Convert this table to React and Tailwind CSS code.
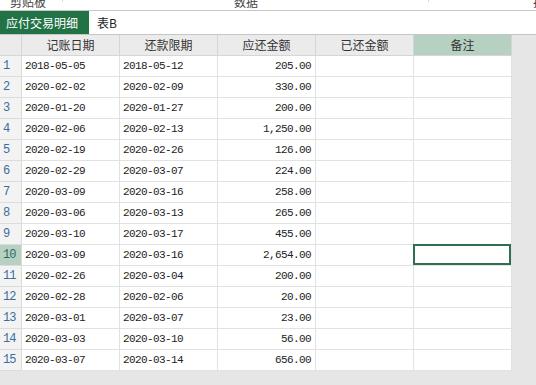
const ROWS = [
  ["2018-05-05", "2018-05-12", "205.00"],
  ["2020-02-02", "2020-02-09", "330.00"],
  ["2020-01-20", "2020-01-27", "200.00"],
  ["2020-02-06", "2020-02-13", "1,250.00"],
  ["2020-02-19", "2020-02-26", "126.00"],
  ["2020-02-29", "2020-03-07", "224.00"],
  ["2020-03-09", "2020-03-16", "258.00"],
  ["2020-03-06", "2020-03-13", "265.00"],
  ["2020-03-10", "2020-03-17", "455.00"],
  ["2020-03-09", "2020-03-16", "2,654.00"],
  ["2020-02-26", "2020-03-04", "200.00"],
  ["2020-02-28", "2020-02-06", "20.00"],
  ["2020-03-01", "2020-03-07", "23.00"],
  ["2020-03-03", "2020-03-10", "56.00"],
  ["2020-03-07", "2020-03-14", "656.00"],
];

const HEADERS = ["记账日期", "还款限期", "应还金额", "已还金额", "备注"];
const SELECTED = 10;

const cjk = "font-['Noto_Sans_CJK_SC',sans-serif]";
const mono = "font-['Liberation_Mono',monospace] text-[11px] tracking-[-0.6px]";

export default function App() {
  return (
    <div className="w-[536px] h-[385px] overflow-hidden bg-[#e6e6e6] text-[#222]">
      {/* ribbon remnant, cut off at the top */}
      <div className={`h-[11px] bg-white border-b border-[#c6c6c6] flex overflow-hidden text-[12px] text-[#444] ${cjk}`}>
        <div className="w-[63px] h-[6px] border-r border-[#d8d8d8] pl-[10px] -mt-[4px] leading-[12px]">剪贴板</div>
        <div className="w-[366px] h-[6px] border-r border-[#d8d8d8] pl-[171px] -mt-[4px] leading-[12px]">数据</div>
        <div className="flex-1 flex justify-end -mt-[4px] leading-[12px]">
          <span className="-mr-[9px]">排</span>
        </div>
      </div>

      {/* sheet tabs */}
      <div className={`h-[24px] bg-white border-b border-[#c6c6c6] flex items-end ${cjk}`}>
        <div className="w-[89px] h-[23px] bg-[#217346] text-white text-[12px] leading-[23px] pl-[6px]">
          应付交易明细
        </div>
        <div className="h-[23px] leading-[23px] text-[12px] pl-[8px] text-[#222]">表B</div>
      </div>

      {/* grid */}
      <div className="w-[512px]">
        <div className={`flex h-[21px] bg-[#ebebeb] border-b border-[#d6d6d6] text-[12px] text-[#333] ${cjk}`}>
          <div className="w-[22px] border-r border-[#d6d6d6]" />
          {HEADERS.map((h, i) => (
            <div
              key={h}
              className={
                "w-[98px] border-r border-[#d6d6d6] flex items-center justify-center leading-none " +
                (i === 4 ? "bg-[#b6d1c1]" : "")
              }
            >
              {h}
            </div>
          ))}
        </div>
        {ROWS.map((r, idx) => {
          const n = idx + 1;
          const sel = n === SELECTED;
          return (
            <div key={n} className="flex h-[21px] bg-white">
              <div
                className={
                  "w-[22px] border-r border-b border-[#dcdcdc] flex items-center pl-[3px] font-['Liberation_Mono',monospace] text-[12px] tracking-[-1px] " +
                  (sel ? "bg-[#b6d1c1] text-[#2f6a6a]" : "bg-[#f3f3f3] text-[#3b6c9e]")
                }
              >
                {n}
              </div>
              <div className={`w-[98px] border-r border-b border-[#e2e2e2] flex items-center pl-[3px] ${mono}`}>{r[0]}</div>
              <div className={`w-[98px] border-r border-b border-[#e2e2e2] flex items-center pl-[3px] ${mono}`}>{r[1]}</div>
              <div className={`w-[98px] border-r border-b border-[#e2e2e2] flex items-center justify-end pr-[4px] ${mono}`}>{r[2]}</div>
              <div className="w-[98px] border-r border-b border-[#e2e2e2]" />
              <div className="w-[98px] border-r border-b border-[#e2e2e2] relative">
                {sel && <div className="absolute -left-px -top-px right-0 bottom-0 border-2 border-[#2f6e4f]" />}
              </div>
            </div>
          );
        })}
      </div>
    </div>
  );
}
